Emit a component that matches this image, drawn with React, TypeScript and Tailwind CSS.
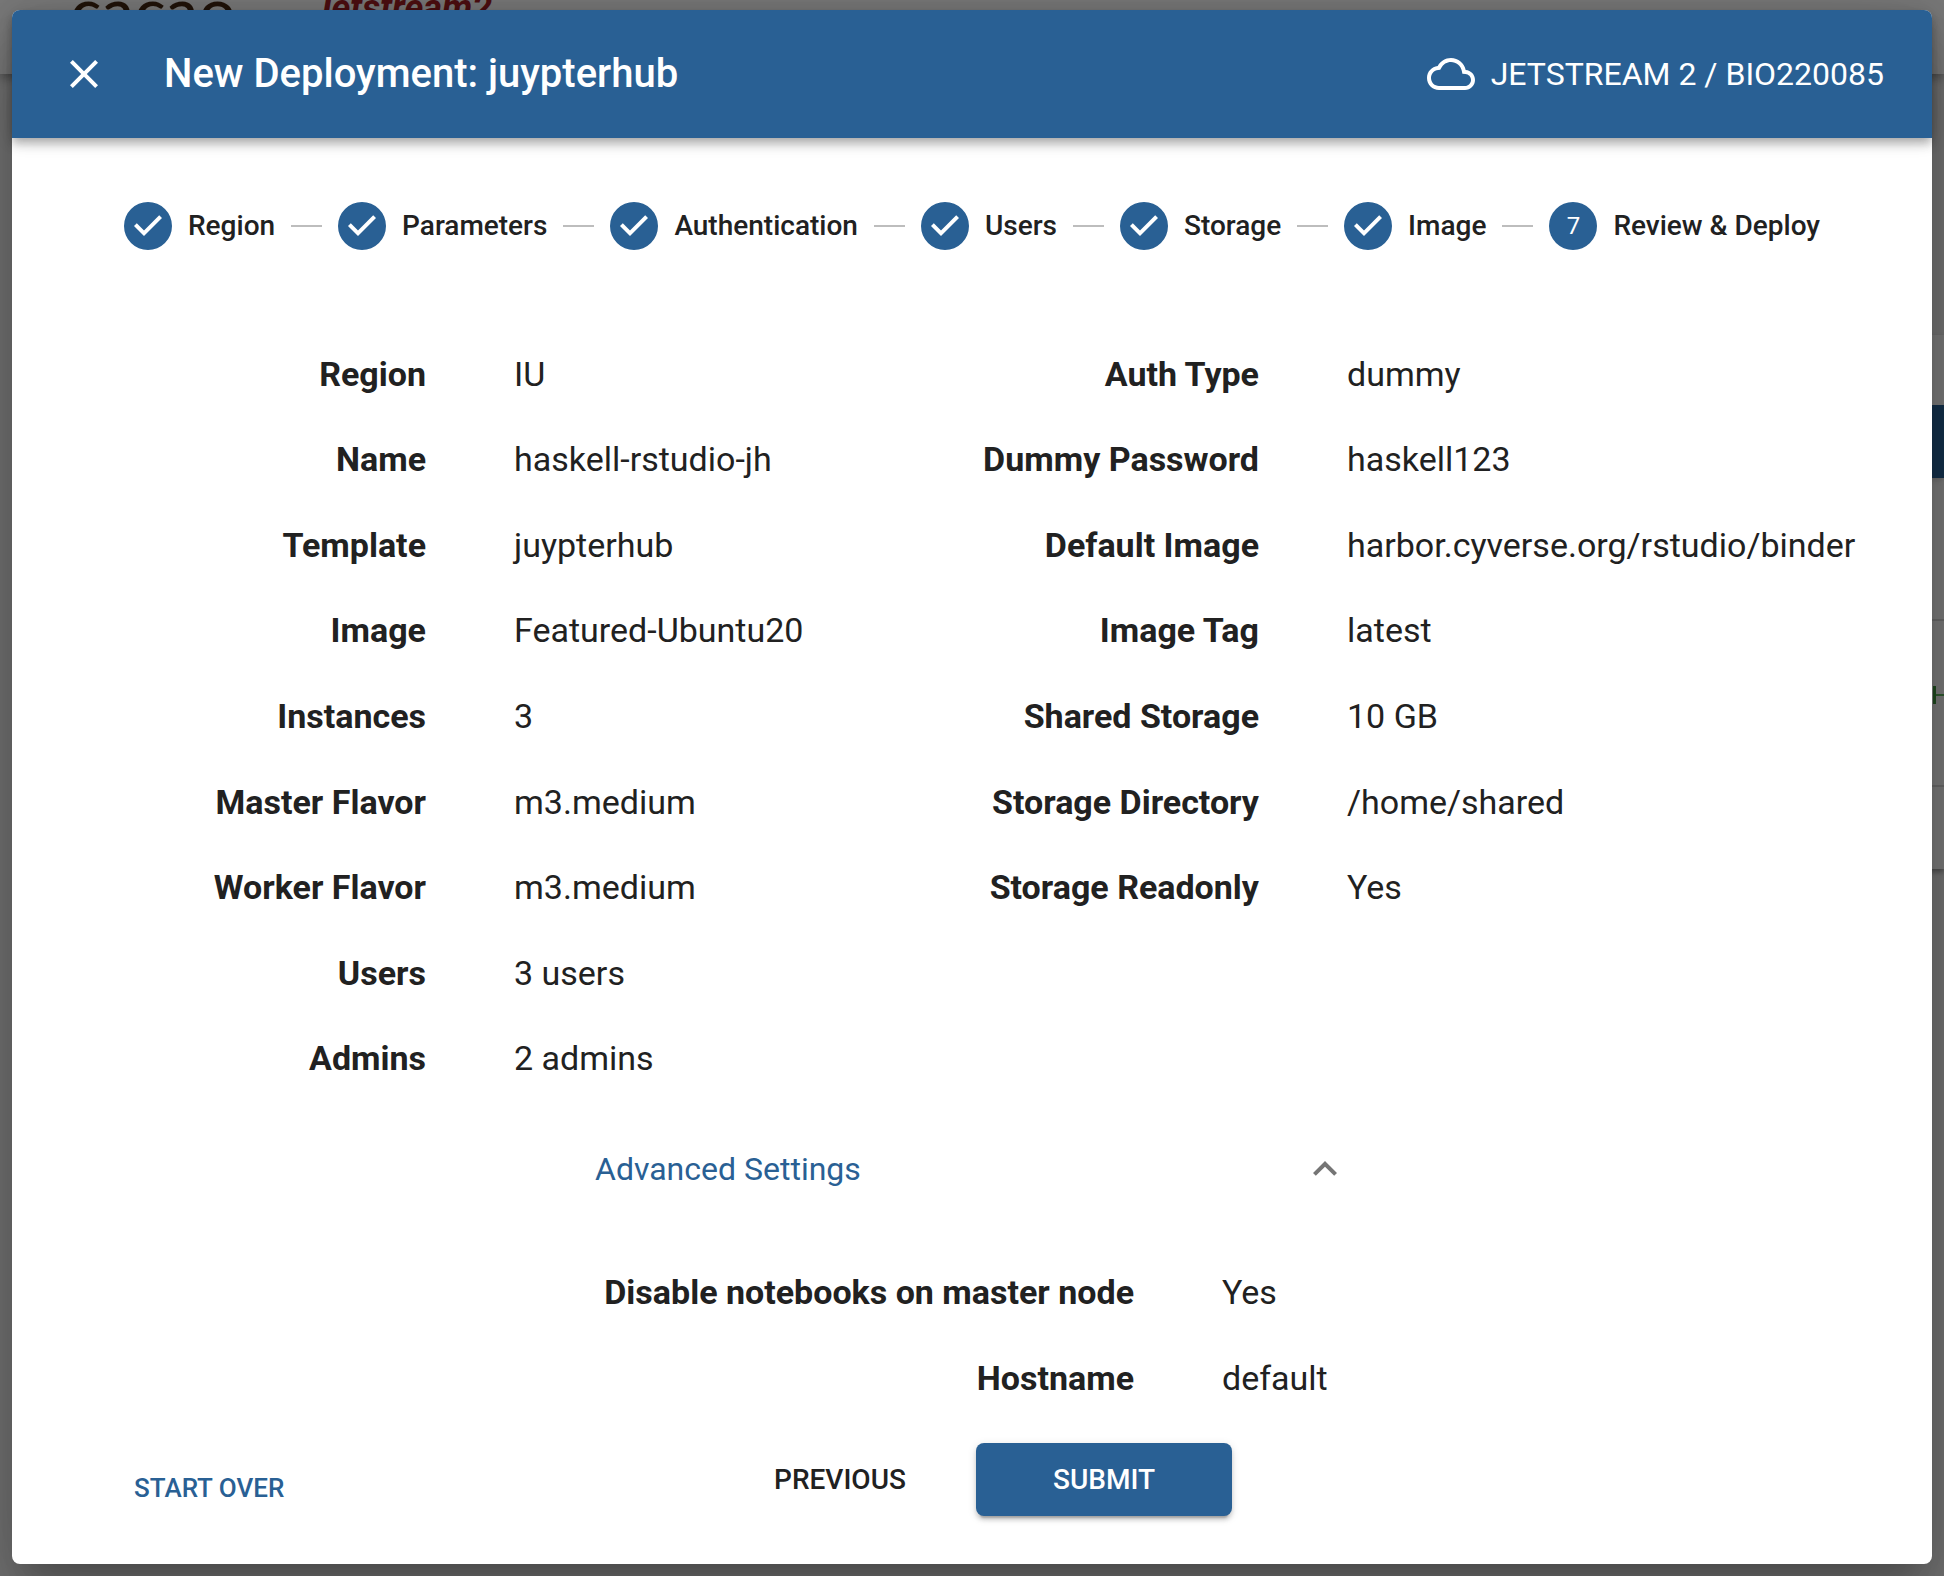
import React from "react";

type Row = [string, string];

const steps = ["Region", "Parameters", "Authentication", "Users", "Storage", "Image", "Review & Deploy"];

const left: Row[] = [
  ["Region", "IU"],
  ["Name", "haskell-rstudio-jh"],
  ["Template", "juypterhub"],
  ["Image", "Featured-Ubuntu20"],
  ["Instances", "3"],
  ["Master Flavor", "m3.medium"],
  ["Worker Flavor", "m3.medium"],
  ["Users", "3 users"],
  ["Admins", "2 admins"],
];

const right: Row[] = [
  ["Auth Type", "dummy"],
  ["Dummy Password", "haskell123"],
  ["Default Image", "harbor.cyverse.org/rstudio/binder"],
  ["Image Tag", "latest"],
  ["Shared Storage", "10 GB"],
  ["Storage Directory", "/home/shared"],
  ["Storage Readonly", "Yes"],
];

const advanced: Row[] = [
  ["Disable notebooks on master node", "Yes"],
  ["Hostname", "default"],
];

function Icon({ d, className }: { d: string; className: string }) {
  return (
    <svg viewBox="0 0 24 24" fill="currentColor" className={className} aria-hidden="true">
      <path d={d} />
    </svg>
  );
}

const CLOSE = "M19 6.41 17.59 5 12 10.59 6.41 5 5 6.41 10.59 12 5 17.59 6.41 19 12 13.41 17.59 19 19 17.59 13.41 12z";
const CLOUD =
  "M19.35 10.04C18.67 6.59 15.64 4 12 4 9.11 4 6.61 5.64 5.36 8.04 2.35 8.36 0 10.9 0 14c0 3.31 2.69 6 6 6h13c2.76 0 5-2.24 5-5 0-2.64-2.05-4.78-4.65-4.96zM19 18H6c-2.21 0-4-1.79-4-4 0-2.05 1.53-3.76 3.56-3.97l1.07-.11.5-.95C8.08 7.14 9.94 6 12 6c2.62 0 4.88 1.86 5.39 4.43l.3 1.5 1.53.11c1.56.1 2.78 1.41 2.78 2.96 0 1.65-1.35 3-3 3z";
const CHECK_CIRCLE =
  "M12 0a12 12 0 1 0 0 24 12 12 0 0 0 0-24zm-2 17l-5-5 1.4-1.4 3.6 3.6 7.6-7.6L19 8l-9 9z";
const EXPAND_LESS = "m12 8-6 6 1.41 1.41L12 10.83l4.59 4.58L18 14z";

function Rows({ rows, className }: { rows: Row[]; className: string }) {
  return (
    <table className={className}>
      <tbody>
        {rows.map(([label, value]) => (
          <tr key={label}>
            <th scope="row" className="p-0 pr-11 text-right font-bold whitespace-nowrap">
              {label}
            </th>
            <td className="p-0 pl-11 whitespace-nowrap">{value}</td>
          </tr>
        ))}
      </tbody>
    </table>
  );
}

function Backdrop() {
  return (
    <div className="absolute inset-0 overflow-hidden bg-[#737373]" aria-hidden="true">
      <div className="relative h-[74px] bg-[#7a7a7a] shadow-[0_4px_10px_rgba(0,0,0,0.35)]">
        <span className="absolute -top-2 left-[70px] font-['Lato',sans-serif] text-[66px] leading-9 text-[#21140a]">
          cacao
        </span>
        <span className="absolute -top-2.5 left-[312px] text-[36px] leading-9 font-bold text-[#4d0f11] italic">
          Jetstream2
        </span>
      </div>
      <div className="absolute top-[335px] right-0 flex h-[534px] w-16 flex-col bg-[#7a7a7a] shadow-[0_3px_5px_rgba(0,0,0,0.35)]">
        <div className="mt-[70px] h-[73px] bg-[#14304a] shadow-md" />
        <div className="mt-[141px] flex h-[168px] items-center justify-end border-y-2 border-[#686868] pb-4">
          <div className="flex h-[18px] w-[11px] items-center border-l-[3px] border-[#1f4a1f]">
            <div className="h-0.5 w-full bg-[#2f5a2f]" />
          </div>
        </div>
      </div>
    </div>
  );
}

export default function App() {
  return (
    <div className="relative min-h-screen px-3 pt-2.5 pb-3 font-['Roboto',sans-serif] text-[#212121]">
      <Backdrop />
      <div
        role="dialog"
        aria-labelledby="dialog-title"
        className="relative flex min-h-[calc(100vh-22px)] flex-col rounded-lg bg-white shadow-[0_22px_30px_-14px_rgba(0,0,0,0.2),0_48px_76px_6px_rgba(0,0,0,0.14),0_18px_92px_16px_rgba(0,0,0,0.12)]"
      >
        <header className="flex h-32 items-center rounded-t-lg bg-[#296094] px-12 text-white shadow-[0_4px_8px_-2px_rgba(0,0,0,0.2),0_8px_10px_rgba(0,0,0,0.14),0_2px_20px_rgba(0,0,0,0.12)]">
          <button type="button" aria-label="Close" className="mr-14">
            <Icon d={CLOSE} className="size-12" />
          </button>
          <h1 id="dialog-title" className="flex-1 text-[40px] leading-[64px] font-medium">
            New Deployment: juypterhub
          </h1>
          <div className="flex items-center gap-4 text-[32px] leading-12">
            <Icon d={CLOUD} className="size-12" />
            <span>JETSTREAM 2 / BIO220085</span>
          </div>
        </header>

        <ol className="flex items-center px-24 pt-16 text-[28px] leading-12 font-medium">
          {steps.map((label, i) => (
            <React.Fragment key={label}>
              {i > 0 && <li aria-hidden="true" className="h-0.5 flex-1 bg-[#bdbdbd]" />}
              <li className="flex items-center gap-4 px-4 whitespace-nowrap">
                {i < steps.length - 1 ? (
                  <Icon d={CHECK_CIRCLE} className="size-12 text-[#296094]" />
                ) : (
                  <span className="flex size-12 items-center justify-center rounded-full bg-[#296094] text-2xl font-normal text-white">
                    {i + 1}
                  </span>
                )}
                <span>{label}</span>
              </li>
            </React.Fragment>
          ))}
        </ol>

        <div className="px-12 text-[34px] leading-12">
          <div className="grid grid-cols-[833px_1fr] items-start pt-[81px]">
            <Rows rows={left} className="h-[770px] w-full table-fixed [&_th]:w-[410px]" />
            <Rows rows={right} className="h-[599px] w-full table-fixed [&_th]:w-[410px]" />
          </div>

          <section className="mx-auto w-[754px]">
            <button
              type="button"
              aria-expanded="true"
              className="flex h-[136px] w-full items-center justify-between text-[32px] text-[#296094]"
            >
              <span>Advanced Settings</span>
              <Icon d={EXPAND_LESS} className="size-12 text-[#757575]" />
            </button>
            <Rows rows={advanced} className="mt-3 h-[172px] [&_th]:w-[583px]" />
          </section>

          <footer className="relative mt-[22px] flex items-center justify-center gap-2 text-[28px] font-medium">
            <button type="button" className="absolute bottom-1 left-[74px] text-[26px] text-[#296094]">
              START OVER
            </button>
            <button type="button" className="h-[73px] w-64">
              PREVIOUS
            </button>
            <button
              type="button"
              className="h-[73px] w-64 rounded-lg bg-[#296094] text-white shadow-[0_6px_2px_-4px_rgba(0,0,0,0.2),0_4px_4px_rgba(0,0,0,0.14),0_2px_10px_rgba(0,0,0,0.12)]"
            >
              SUBMIT
            </button>
          </footer>
        </div>
      </div>
    </div>
  );
}
